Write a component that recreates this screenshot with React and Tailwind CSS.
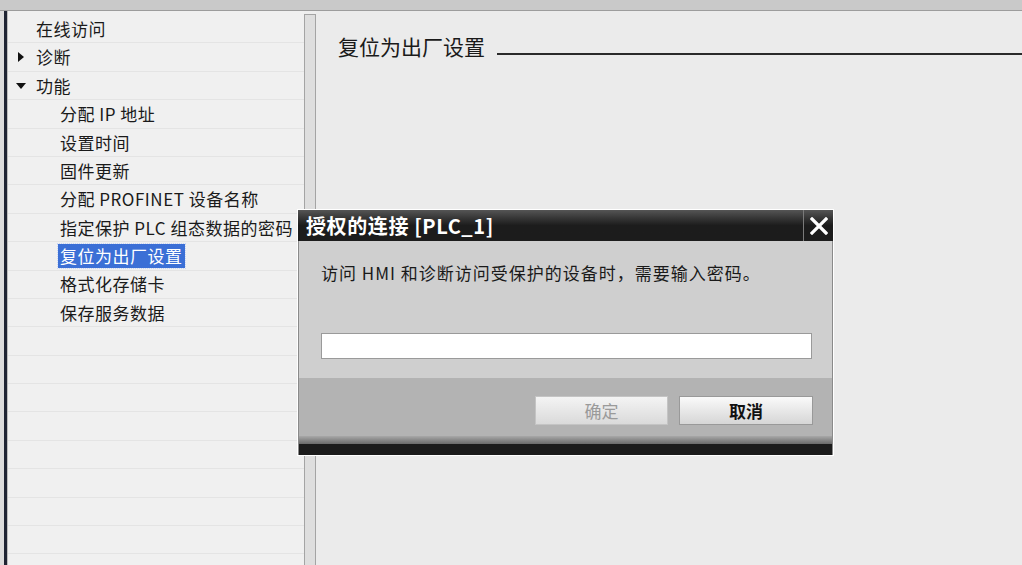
const FONT = { fontFamily: '"Microsoft YaHei", "Noto Sans CJK SC", "Noto Sans", sans-serif' };

const rows = [
  { label: "在线访问", level: 0 },
  { label: "诊断", level: 0, arrow: "right" },
  { label: "功能", level: 0, arrow: "down" },
  { label: "分配 IP 地址", level: 1 },
  { label: "设置时间", level: 1 },
  { label: "固件更新", level: 1 },
  { label: "分配 PROFINET 设备名称", level: 1 },
  { label: "指定保护 PLC 组态数据的密码", level: 1 },
  { label: "复位为出厂设置", level: 1, selected: true },
  { label: "格式化存储卡", level: 1 },
  { label: "保存服务数据", level: 1 },
];

function TreeRow({ row }) {
  return (
    <div className="h-[28.4px] border-b border-[#e4e4e4] flex items-center text-[17px] tracking-[0.5px] text-[#1a1a1a] relative">
      {row.arrow === "right" && (
        <span className="absolute left-[10px] top-[9px] w-0 h-0 border-y-[5px] border-y-transparent border-l-[6px] border-l-[#111]" />
      )}
      {row.arrow === "down" && (
        <span className="absolute left-[8px] top-[11px] w-0 h-0 border-x-[5px] border-x-transparent border-t-[6px] border-t-[#111]" />
      )}
      <span
        className={
          row.level === 0
            ? "ml-[28px]"
            : row.selected
            ? "ml-[50px] px-[2px] bg-[#3b6fd6] text-white outline outline-1 outline-dotted outline-[#c9d6f5] leading-[24px]"
            : "ml-[52px]"
        }
      >
        {row.label}
      </span>
    </div>
  );
}

function Dialog() {
  return (
    <div className="absolute left-[297px] top-[209px] w-[537px] h-[247px] border border-white flex flex-col" style={FONT}>
      <div className="h-[31px] flex bg-gradient-to-b from-[#555] via-[#1c1c1c] to-[#1c1c1c]">
        <div className="flex-1 flex items-center pl-[8px] text-white font-bold text-[20px] tracking-[0.6px]">
          授权的连接 [PLC_1]
        </div>
        <div className="w-[30px] border-l border-[#7a7a7a] flex items-center justify-center">
          <svg width="18" height="18" viewBox="0 0 18 18">
            <path d="M2 2 L16 16 M16 2 L2 16" stroke="#fff" strokeWidth="3.2" strokeLinecap="square" />
          </svg>
        </div>
      </div>
      <div className="h-[137px] bg-[#cfcfcf] border-x border-[#8a8a8a] px-[22px] pt-[19px]">
        <div className="text-[17px] text-[#1a1a1a] tracking-[1px]">访问 HMI 和诊断访问受保护的设备时，需要输入密码。</div>
        <div className="mt-[47px] h-[26px] w-[491px] bg-white border border-[#9a9a9a]" />
      </div>
      <div className="flex-1 bg-[#b3b3b3] border-x border-[#8a8a8a] flex flex-col">
        <div className="flex justify-end gap-[11px] pr-[19px] pt-[18px]">
          <button className="w-[133px] h-[29px] border border-[#c4c4c4] bg-gradient-to-b from-[#f4f4f4] to-[#dadada] text-[17px] text-[#9a9a9a]">
            确定
          </button>
          <button className="w-[134px] h-[29px] border border-[#999] bg-gradient-to-b from-[#fafafa] to-[#d6d6d6] text-[17px] text-[#111] font-bold">
            取消
          </button>
        </div>
        <div className="mt-auto h-[8px] bg-gradient-to-b from-[#a8a8a8] to-[#6a6a6a]" />
        <div className="h-[11px] bg-[#1b1b1b]" />
      </div>
    </div>
  );
}

export default function App() {
  return (
    <div className="w-[1022px] h-[565px] relative overflow-hidden bg-[#ebebeb] flex flex-col" style={FONT}>
      <div className="h-[11px] bg-[#c9c9c9] border-b border-[#9c9c9c]" />
      <div className="flex-1 flex min-h-0">
        <div className="w-[4px] bg-[#dcdcdc]" />
        <div className="w-[3px] bg-[#1f2433]" />
        <div className="w-[297px] bg-[#f0f0f0] pt-[4px] border-l border-[#bdbdbd] overflow-hidden">
          {rows.map((r, i) => (
            <TreeRow key={i} row={r} />
          ))}
          {Array.from({ length: 8 }).map((_, i) => (
            <div key={"e" + i} className="h-[28.4px] border-b border-[#e4e4e4]" />
          ))}
        </div>
        <div className="w-[12px] pt-[3px] bg-[#eeeeee]">
          <div className="h-full bg-[#dedede] border-x border-t border-[#a4a4a4]" />
        </div>
        <div className="flex-1 pl-[22px] pt-[21px]">
          <div className="flex items-end">
            <span className="text-[21px] text-[#1a1a1a] leading-[28px]">复位为出厂设置</span>
            <div className="flex-1 ml-[12px] mb-[5px] h-[2px] bg-[#2a2a2a]" />
          </div>
        </div>
      </div>
      <Dialog />
    </div>
  );
}
